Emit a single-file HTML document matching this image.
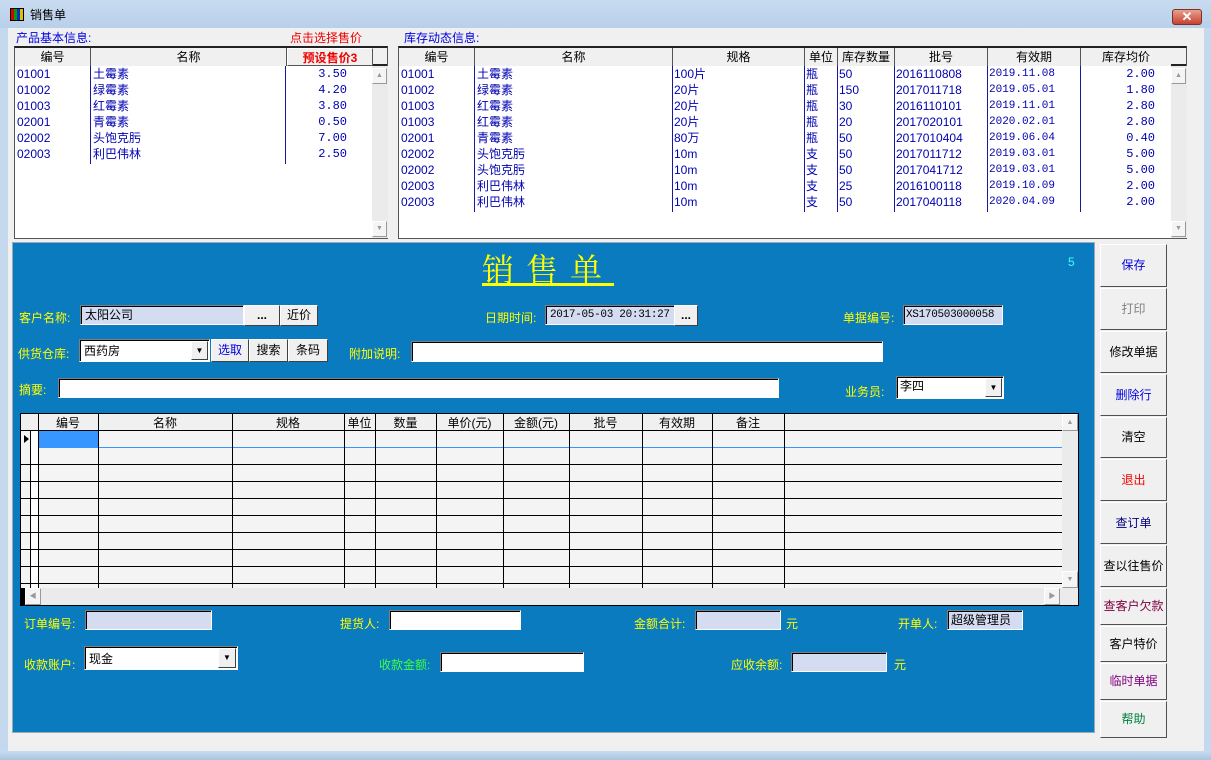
<!DOCTYPE html>
<html><head><meta charset="utf-8">
<style>
*{margin:0;padding:0;box-sizing:border-box}
body{width:1211px;height:760px;position:relative;overflow:hidden;background:#c5d9ee;font-family:"Liberation Sans","SimSun","Noto Sans CJK SC",sans-serif;font-size:12px}
.a{position:absolute}
.t{position:absolute;white-space:nowrap;font-family:"Liberation Sans","Noto Sans CJK SC",sans-serif;font-size:12px;line-height:16px}
.hd{position:absolute;top:0;height:18px;border-right:1px solid #555;text-align:center;line-height:18px;background:#f0f0f0}
.cell{position:absolute;color:#0000b0;font-size:12px;line-height:16px;white-space:nowrap}
.mono{font-family:"Liberation Mono","Noto Sans CJK SC",monospace;font-size:12px}
.vl{position:absolute;width:1px;background:#1818a0}
.btn{position:absolute;background:#f0f0f0;border:1px solid;border-color:#fff #404040 #404040 #fff;text-align:center;font-size:12px}
.sunk{position:absolute;border:1px solid;border-color:#808080 #fff #fff #808080;box-shadow:inset 1px 1px 0 #000}
.lbl{position:absolute;color:#ffff00;font-size:12px;white-space:nowrap;line-height:16px}
.sb{position:absolute;background:#f4f4f4;border:1px solid #ccc;border-color:#fff #999 #999 #fff}
.rb{position:absolute;left:1100px;width:67px;background:#f0f0f0;border:1px solid;border-color:#fff #505050 #505050 #fff;text-align:center;font-size:12px;}
</style></head><body>
<div class="a" style="left:0;top:0;width:1211px;height:28px;background:linear-gradient(#c8dbf0,#b9d0ea)"></div>
<div class="a" style="left:10px;top:8px;width:14px;height:13px;background:linear-gradient(90deg,#d00 0 25%,#00a000 25% 50%,#0030d0 50% 75%,#e0c000 75%);border:1px solid #000"></div>
<div class="t" style="left:30px;top:7px;color:#000">销售单</div>
<div class="a" style="left:1172px;top:9px;width:30px;height:16px;background:linear-gradient(#e8a090,#c84030);border:1px solid #803020;border-radius:3px;color:#fff;text-align:center;font-weight:bold;line-height:14px;font-size:13px">✕</div>
<div class="a" style="left:8px;top:28px;width:1196px;height:723px;background:#f0f0f0"></div>

<div class="t" style="left:16px;top:30px;color:#0000e0">产品基本信息:</div>
<div class="t" style="left:290px;top:30px;color:#f00000">点击选择售价</div>
<div class="t" style="left:404px;top:30px;color:#0000e0">库存动态信息:</div>

<div class="a" style="left:14px;top:46px;width:374px;height:193px;background:#fff;border:1px solid #555;border-top:2px solid #222">
 <div class="a" style="left:0;top:0;width:372px;height:18px;background:#f0f0f0;border-bottom:2px solid #222"></div>
 <div class="hd" style="left:0;width:76px">编号</div>
 <div class="hd" style="left:76px;width:196px">名称</div>
 <div class="hd" style="left:272px;width:86px;color:#f00000;font-weight:bold;border:1px solid;border-color:#fff #555 #555 #fff">预设售价3</div>
 <div class="vl" style="left:75px;top:18px;height:98px"></div>
 <div class="vl" style="left:270px;top:18px;height:98px"></div>
 <div class="a" style="left:357px;top:18px;width:16px;height:172px;background:#ebebeb"></div>
 <div class="sb" style="left:357px;top:20px;width:15px;height:16px;font-size:7px;color:#999;text-align:center;line-height:14px">▲</div>
 <div class="sb" style="left:357px;top:173px;width:15px;height:16px;font-size:7px;color:#999;text-align:center;line-height:14px">▼</div>
 <div class="cell" style="left:2px;top:18px;line-height:16px">01001<br>01002<br>01003<br>02001<br>02002<br>02003</div>
 <div class="cell" style="left:78px;top:18px">土霉素<br>绿霉素<br>红霉素<br>青霉素<br>头饱克肟<br>利巴伟林</div>
 <div class="cell mono" style="left:290px;top:18px;width:42px;text-align:right">3.50<br>4.20<br>3.80<br>0.50<br>7.00<br>2.50</div>
</div>

<div class="a" style="left:398px;top:46px;width:789px;height:193px;background:#fff;border:1px solid #555;border-top:2px solid #222">
 <div class="a" style="left:0;top:0;width:787px;height:18px;background:#f0f0f0;border-bottom:2px solid #222"></div>
 <div class="hd" style="left:0;width:76px">编号</div>
 <div class="hd" style="left:76px;width:198px">名称</div>
 <div class="hd" style="left:274px;width:132px">规格</div>
 <div class="hd" style="left:406px;width:33px">单位</div>
 <div class="hd" style="left:439px;width:57px">库存数量</div>
 <div class="hd" style="left:496px;width:93px">批号</div>
 <div class="hd" style="left:589px;width:93px">有效期</div>
 <div class="hd" style="left:682px;width:90px;border-right:none">库存均价</div>
 <div class="vl" style="left:75px;top:18px;height:146px"></div>
 <div class="vl" style="left:273px;top:18px;height:146px"></div>
 <div class="vl" style="left:405px;top:18px;height:146px"></div>
 <div class="vl" style="left:438px;top:18px;height:146px"></div>
 <div class="vl" style="left:495px;top:18px;height:146px"></div>
 <div class="vl" style="left:588px;top:18px;height:146px"></div>
 <div class="vl" style="left:681px;top:18px;height:146px"></div>
 <div class="a" style="left:772px;top:18px;width:16px;height:172px;background:#ebebeb"></div>
 <div class="sb" style="left:772px;top:20px;width:15px;height:16px;font-size:7px;color:#999;text-align:center;line-height:14px">▲</div>
 <div class="sb" style="left:772px;top:173px;width:15px;height:16px;font-size:7px;color:#999;text-align:center;line-height:14px">▼</div>
 <div class="cell" style="left:2px;top:18px">01001<br>01002<br>01003<br>01003<br>02001<br>02002<br>02002<br>02003<br>02003</div>
 <div class="cell" style="left:78px;top:18px">土霉素<br>绿霉素<br>红霉素<br>红霉素<br>青霉素<br>头饱克肟<br>头饱克肟<br>利巴伟林<br>利巴伟林</div>
 <div class="cell" style="left:275px;top:18px">100片<br>20片<br>20片<br>20片<br>80万<br>10m<br>10m<br>10m<br>10m</div>
 <div class="cell" style="left:407px;top:18px">瓶<br>瓶<br>瓶<br>瓶<br>瓶<br>支<br>支<br>支<br>支</div>
 <div class="cell" style="left:440px;top:18px">50<br>150<br>30<br>20<br>50<br>50<br>50<br>25<br>50</div>
 <div class="cell" style="left:497px;top:18px">2016110808<br>2017011718<br>2016110101<br>2017020101<br>2017010404<br>2017011712<br>2017041712<br>2016100118<br>2017040118</div>
 <div class="cell mono" style="left:590px;top:18px;font-size:11px">2019.11.08<br>2019.05.01<br>2019.11.01<br>2020.02.01<br>2019.06.04<br>2019.03.01<br>2019.03.01<br>2019.10.09<br>2020.04.09</div>
 <div class="cell mono" style="left:710px;top:18px;width:46px;text-align:right">2.00<br>1.80<br>2.80<br>2.80<br>0.40<br>5.00<br>5.00<br>2.00<br>2.00</div>
</div>

<div class="a" style="left:12px;top:242px;width:1083px;height:491px;background:#0a7bbf;border:1px solid #9ab;"></div>
<div class="a" style="left:482px;top:250px;color:#ffff00;font-size:32px;line-height:36px;font-family:'Noto Serif CJK SC','Noto Sans CJK SC',serif;text-decoration:underline;letter-spacing:12px;white-space:nowrap">销售单</div>
<div class="t" style="left:1068px;top:254px;color:#40ffff">5</div>

<div class="lbl" style="left:19px;top:310px">客户名称:</div>
<div class="sunk" style="left:80px;top:305px;width:164px;height:20px;background:#d4dcf2"></div>
<div class="t" style="left:85px;top:307px">太阳公司</div>
<div class="btn" style="left:244px;top:305px;width:36px;height:21px;line-height:18px;font-weight:bold">...</div>
<div class="btn" style="left:280px;top:305px;width:38px;height:21px;line-height:19px">近价</div>

<div class="lbl" style="left:485px;top:310px">日期时间:</div>
<div class="sunk" style="left:545px;top:305px;width:130px;height:20px;background:#d4dcf2"></div>
<div class="t mono" style="left:550px;top:307px;font-size:11px;letter-spacing:-0.3px">2017-05-03 20:31:27</div>
<div class="btn" style="left:674px;top:305px;width:24px;height:21px;font-weight:bold;line-height:18px">...</div>

<div class="lbl" style="left:843px;top:310px">单据编号:</div>
<div class="sunk" style="left:903px;top:305px;width:100px;height:20px;background:#d4dcf2"></div>
<div class="t mono" style="left:906px;top:307px;font-size:11px;letter-spacing:-0.3px">XS170503000058</div>

<div class="lbl" style="left:18px;top:346px">供货仓库:</div>
<div class="sunk" style="left:79px;top:339px;width:131px;height:23px;background:#fff"></div>
<div class="t" style="left:84px;top:343px">西药房</div>
<div class="btn" style="left:191px;top:341px;width:17px;height:19px;font-size:8px;line-height:17px">▼</div>
<div class="btn" style="left:211px;top:339px;width:38px;height:23px;line-height:21px;color:#0000e0">选取</div>
<div class="btn" style="left:249px;top:339px;width:39px;height:23px;line-height:21px">搜索</div>
<div class="btn" style="left:288px;top:339px;width:40px;height:23px;line-height:21px">条码</div>

<div class="lbl" style="left:349px;top:346px">附加说明:</div>
<div class="sunk" style="left:411px;top:341px;width:472px;height:21px;background:#fff"></div>

<div class="lbl" style="left:19px;top:382px">摘要:</div>
<div class="sunk" style="left:58px;top:378px;width:721px;height:20px;background:#fff"></div>

<div class="lbl" style="left:845px;top:384px">业务员:</div>
<div class="sunk" style="left:896px;top:376px;width:108px;height:23px;background:#fff"></div>
<div class="t" style="left:900px;top:378px">李四</div>
<div class="btn" style="left:985px;top:378px;width:17px;height:19px;font-size:8px;line-height:17px">▼</div>

<div class="a" style="left:20px;top:413px;width:1059px;height:193px;background:#f4f4f4;border:1px solid #000">
 <div class="a" style="left:0;top:0;width:1041px;height:17px;background:#f0f0f0;border-bottom:1px solid #000"></div>
 <div class="a" style="left:10px;top:17px;width:7px;height:157px;background:#fff"></div>
 <div class="a" style="left:18px;top:17px;width:59px;height:17px;background:#3796ff"></div>
 <div class="a" style="left:3px;top:21px;width:0;height:0;border-left:5px solid #000;border-top:4px solid transparent;border-bottom:4px solid transparent"></div>
 <div class="a" style="left:77px;top:33px;width:964px;height:1px;background:#3796ff"></div>
 <div class="a" style="left:0;top:50px;width:1041px;height:1px;background:#000"></div>
 <div class="a" style="left:0;top:67px;width:1041px;height:1px;background:#000"></div>
 <div class="a" style="left:0;top:84px;width:1041px;height:1px;background:#000"></div>
 <div class="a" style="left:0;top:101px;width:1041px;height:1px;background:#000"></div>
 <div class="a" style="left:0;top:118px;width:1041px;height:1px;background:#000"></div>
 <div class="a" style="left:0;top:135px;width:1041px;height:1px;background:#000"></div>
 <div class="a" style="left:0;top:152px;width:1041px;height:1px;background:#000"></div>
 <div class="a" style="left:0;top:169px;width:1041px;height:1px;background:#000"></div>
 <div class="a" style="left:9px;top:17px;width:1px;height:157px;background:#000"></div>
 <div class="a" style="left:17px;top:0;width:1px;height:174px;background:#000"></div>
 <div class="a" style="left:77px;top:0;width:1px;height:174px;background:#000"></div>
 <div class="a" style="left:211px;top:0;width:1px;height:174px;background:#000"></div>
 <div class="a" style="left:323px;top:0;width:1px;height:174px;background:#000"></div>
 <div class="a" style="left:354px;top:0;width:1px;height:174px;background:#000"></div>
 <div class="a" style="left:415px;top:0;width:1px;height:174px;background:#000"></div>
 <div class="a" style="left:482px;top:0;width:1px;height:174px;background:#000"></div>
 <div class="a" style="left:548px;top:0;width:1px;height:174px;background:#000"></div>
 <div class="a" style="left:621px;top:0;width:1px;height:174px;background:#000"></div>
 <div class="a" style="left:691px;top:0;width:1px;height:174px;background:#000"></div>
 <div class="a" style="left:763px;top:0;width:1px;height:174px;background:#000"></div>
 <div class="t" style="left:17px;top:1px;width:60px;text-align:center">编号</div>
 <div class="t" style="left:77px;top:1px;width:134px;text-align:center">名称</div>
 <div class="t" style="left:211px;top:1px;width:112px;text-align:center">规格</div>
 <div class="t" style="left:323px;top:1px;width:31px;text-align:center">单位</div>
 <div class="t" style="left:354px;top:1px;width:61px;text-align:center">数量</div>
 <div class="t" style="left:415px;top:1px;width:67px;text-align:center">单价(元)</div>
 <div class="t" style="left:482px;top:1px;width:66px;text-align:center">金额(元)</div>
 <div class="t" style="left:548px;top:1px;width:73px;text-align:center">批号</div>
 <div class="t" style="left:621px;top:1px;width:70px;text-align:center">有效期</div>
 <div class="t" style="left:691px;top:1px;width:72px;text-align:center">备注</div>
 <div class="a" style="left:1041px;top:0;width:16px;height:174px;background:#ebebeb"></div>
 <div class="sb" style="left:1041px;top:0;width:16px;height:17px;font-size:7px;color:#999;text-align:center;line-height:15px">▲</div>
 <div class="sb" style="left:1041px;top:157px;width:16px;height:17px;font-size:7px;color:#999;text-align:center;line-height:15px">▼</div>
 <div class="a" style="left:0;top:174px;width:1057px;height:17px;background:#ebebeb"></div>
 <div class="a" style="left:0;top:174px;width:4px;height:17px;background:#000"></div>
 <div class="sb" style="left:4px;top:174px;width:16px;height:17px;font-size:7px;color:#999;text-align:center;line-height:15px">◀</div>
 <div class="sb" style="left:1023px;top:174px;width:16px;height:17px;font-size:7px;color:#999;text-align:center;line-height:15px">▶</div>
</div>

<div class="lbl" style="left:24px;top:616px">订单编号:</div>
<div class="sunk" style="left:85px;top:610px;width:127px;height:20px;background:#d4dcf2"></div>
<div class="lbl" style="left:340px;top:616px">提货人:</div>
<div class="sunk" style="left:389px;top:610px;width:132px;height:20px;background:#fff"></div>
<div class="lbl" style="left:634px;top:616px">金额合计:</div>
<div class="sunk" style="left:695px;top:610px;width:86px;height:20px;background:#d4dcf2"></div>
<div class="lbl" style="left:786px;top:616px">元</div>
<div class="lbl" style="left:898px;top:616px">开单人:</div>
<div class="sunk" style="left:947px;top:610px;width:76px;height:20px;background:#d4dcf2"></div>
<div class="t" style="left:951px;top:612px">超级管理员</div>

<div class="lbl" style="left:24px;top:657px">收款账户:</div>
<div class="sunk" style="left:84px;top:646px;width:154px;height:24px;background:#fff"></div>
<div class="t" style="left:89px;top:651px">现金</div>
<div class="btn" style="left:218px;top:648px;width:18px;height:20px;font-size:8px;line-height:18px">▼</div>
<div class="lbl" style="left:379px;top:657px;color:#40ff40">收款金额:</div>
<div class="sunk" style="left:440px;top:652px;width:144px;height:20px;background:#fff"></div>
<div class="lbl" style="left:731px;top:657px">应收余额:</div>
<div class="sunk" style="left:791px;top:652px;width:96px;height:20px;background:#d4dcf2"></div>
<div class="lbl" style="left:894px;top:657px">元</div>

<div class="rb" style="top:244px;height:43px;line-height:41px;color:#0000e0">保存</div>
<div class="rb" style="top:288px;height:42px;line-height:40px;color:#808080">打印</div>
<div class="rb" style="top:331px;height:42px;line-height:40px;color:#000">修改单据</div>
<div class="rb" style="top:374px;height:42px;line-height:40px;color:#0000e0">删除行</div>
<div class="rb" style="top:417px;height:41px;line-height:39px;color:#000">清空</div>
<div class="rb" style="top:459px;height:42px;line-height:40px;color:#f00000">退出</div>
<div class="rb" style="top:502px;height:42px;line-height:40px;color:#000080">查订单</div>
<div class="rb" style="top:545px;height:42px;line-height:40px;color:#000">查以往售价</div>
<div class="rb" style="top:588px;height:37px;line-height:35px;color:#800040">查客户欠款</div>
<div class="rb" style="top:626px;height:36px;line-height:34px;color:#000">客户特价</div>
<div class="rb" style="top:663px;height:37px;line-height:35px;color:#800080">临时单据</div>
<div class="rb" style="top:701px;height:37px;line-height:35px;color:#008040">帮助</div>

<div class="a" style="left:0;top:751px;width:1211px;height:9px;background:linear-gradient(#c8dcf0,#a8c4e0)"></div>
</body></html>
